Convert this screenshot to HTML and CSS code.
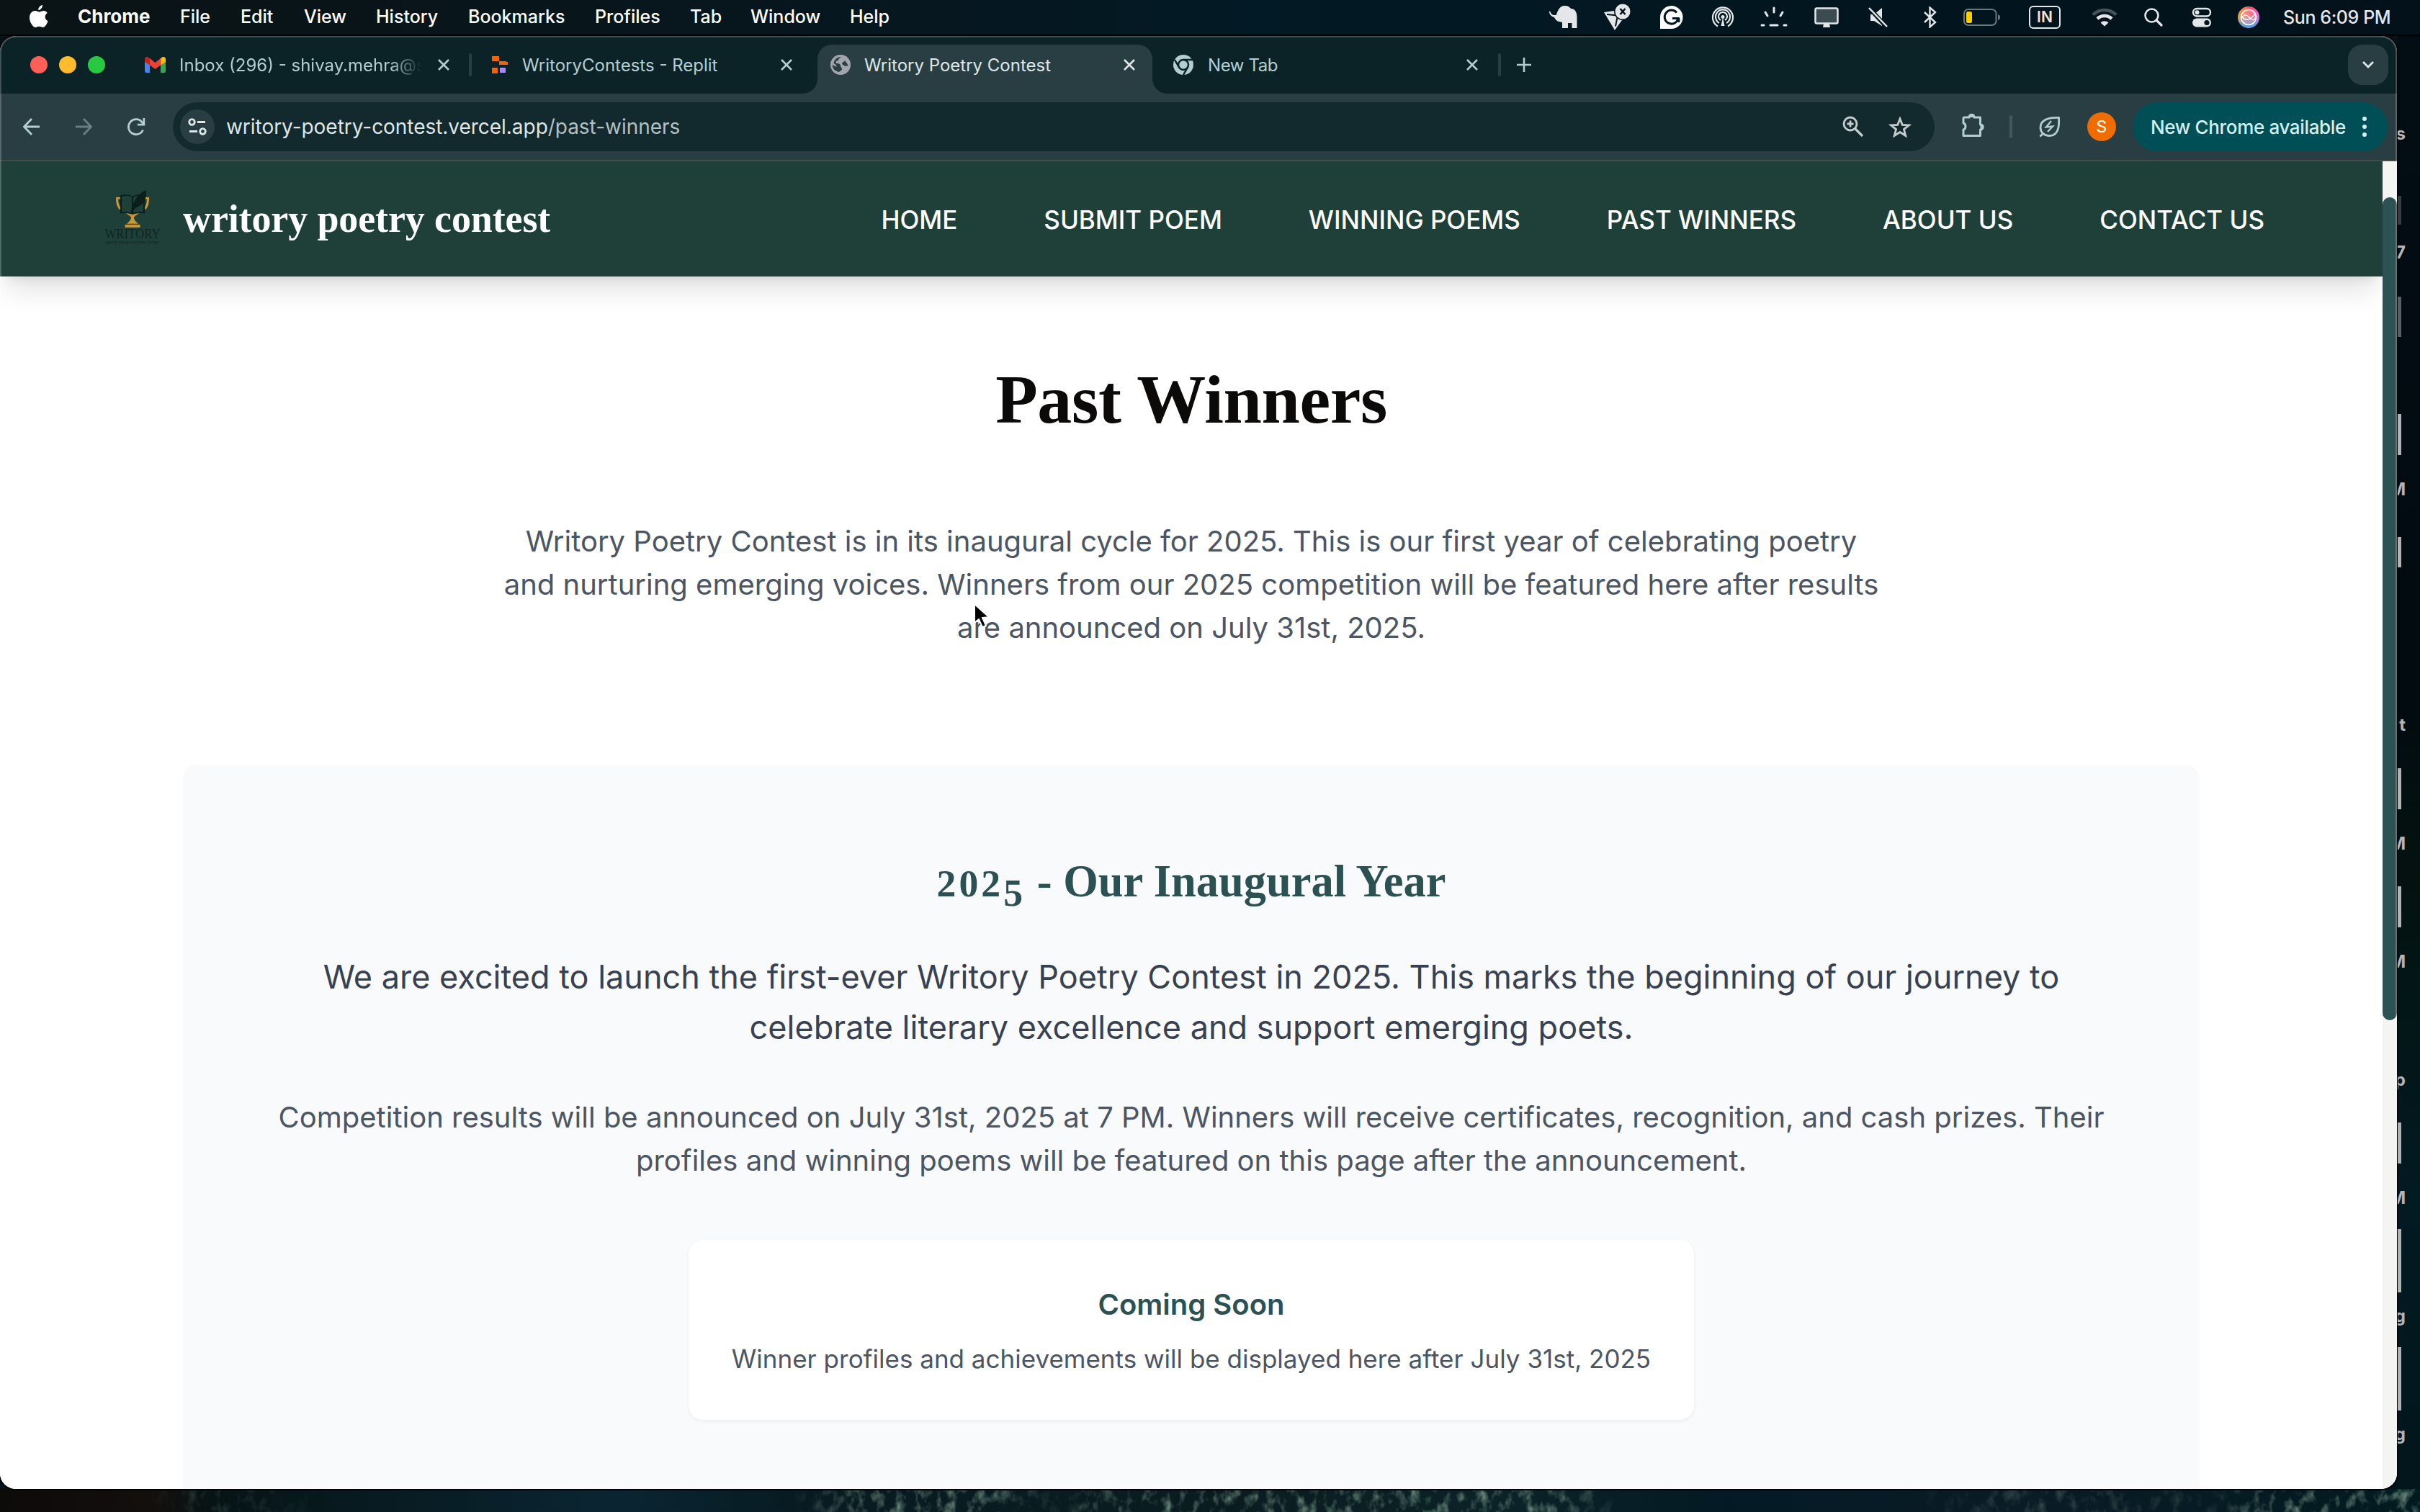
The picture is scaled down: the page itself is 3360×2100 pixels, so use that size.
FILE: index.html
```html
<!DOCTYPE html>
<html lang="en">
<head>
<meta charset="utf-8">
<title>Writory Poetry Contest</title>
<link rel="stylesheet" href="styles.css">
</head>
<body>
<div class="menubar">
  <svg class="apple" width="28" height="32" viewBox="0 0 28 32" fill="#fff"><path d="M19 0c.3 3.500-2.800 7-5.800 7C12.800 3.600 16 .4 19 0z"/><path d="M25.800 11c-4.600 2.900-3.800 9.300.8 11.200C25.300 26 22.500 31 19.600 31c-2 0-2.700-1.200-5.100-1.200S11.200 31 9.400 31C5.500 31 1 23.600 1 17.500 1 11.300 5 8 8.800 8c2.500 0 4.100 1.500 5.900 1.500C16.400 9.500 17.900 8 20.800 8c2 0 3.900 1.100 5 3z"/></svg>
  <div class="menus"><b>Chrome</b><span>File</span><span>Edit</span><span>View</span><span>History</span><span>Bookmarks</span><span>Profiles</span><span>Tab</span><span>Window</span><span>Help</span></div>
  <div class="status">
    <svg width="40" height="32" viewBox="0 0 40 32" fill="#e4e7e9"><path d="M1 8c1-.5 1.500 0 2 1.500 1 3 4 4.500 8 3C13 6 16 0 22 0c5 0 7 1.500 9 4 6 0 8.500 5 8.500 12v15h-7v-7h-5.500v7h-8v-8c-7-1-9-3-11-7C4 15 1 12 1 8z"/></svg>
    <svg width="38" height="38" viewBox="0 0 38 38"><path d="M1 12l14-2 11 13-10 14z" fill="#e4e7e9"/><path d="M5 15l15 1.500-3 15" stroke="#03161f" stroke-width="2" fill="none"/><circle cx="27" cy="11" r="12" fill="#03161f"/><circle cx="27" cy="11" r="10.500" fill="#e4e7e9"/><path d="M23.500 7l7 8m0-8l-7 8" stroke="#03161f" stroke-width="2.600"/></svg>
    <svg width="33" height="32" viewBox="0 0 33 32"><path d="M16.500 0a16 16 0 1 1 0 32H1V16A16 16 0 0 1 16.500 0z" fill="#fff"/><path d="M24 9.500a9.500 9.500 0 1 0 2 8H18M27 17v6" fill="none" stroke="#03161f" stroke-width="3"/></svg>
    <svg width="32" height="32" viewBox="0 0 32 32" fill="none" stroke="#e4e7e9" stroke-width="2.200"><path d="M9 28.500a14 14 0 1 1 14 0M11 24a10 10 0 1 1 10 0M13 20a6 6 0 1 1 6 0"/><path d="M16 16l-2.500 12h5z" fill="#e4e7e9" stroke="none"/><circle cx="16" cy="15.500" r="2.500" fill="#e4e7e9" stroke="none"/></svg>
    <svg width="40" height="30" viewBox="0 0 40 30" fill="none" stroke="#e4e7e9" stroke-width="3" stroke-linecap="round"><path d="M20 2v6M8 8l3 5M32 8l-3 5M3 26h3M15 26h10M34 26h3"/></svg>
    <svg width="34" height="28" viewBox="0 0 34 28"><rect x="1.500" y="1.500" width="31" height="21" rx="2" fill="#3b4b51" stroke="#e4e7e9" stroke-width="2.500"/><path d="M13 23h8l1 5H12z" fill="#e4e7e9"/></svg>
    <svg width="28" height="28" viewBox="0 0 28 28"><path d="M3 10h5l11-9v25L8 19H3z" fill="#e4e7e9"/><path d="M1 1l24 26" stroke="#03161f" stroke-width="6"/><path d="M1 1l25 26" stroke="#e4e7e9" stroke-width="2.500"/></svg>
    <svg width="20" height="30" viewBox="0 0 20 30" fill="none" stroke="#e4e7e9" stroke-width="2.400"><path d="M2 8l15 14-7.500 6.500V1.500L17 8 2 22"/></svg>
    <svg width="52" height="24" viewBox="0 0 52 24"><rect x="1" y="1" width="44.500" height="22" rx="6" fill="none" stroke="#6d787d" stroke-width="2"/><path d="M48 8c4 1 4 7 0 8z" fill="#6d787d"/><rect x="4" y="4" width="8" height="16" rx="2.500" fill="#fc0"/></svg>
    <span class="ime">IN</span>
    <svg width="36" height="26" viewBox="0 0 36 26" fill="none" stroke="#e4e7e9" stroke-width="4.500"><path d="M2 9.500a23 23 0 0 1 32 0" stroke="#46545a"/><path d="M8 15a14.500 14.500 0 0 1 20 0"/><path d="M12.500 20.500a8 8 0 0 1 11 0L18 25.500z" fill="#e4e7e9" stroke="none"/></svg>
    <svg width="26" height="26" viewBox="0 0 26 26" fill="none" stroke="#e4e7e9" stroke-width="2.600" stroke-linecap="round"><circle cx="10.500" cy="10.500" r="9"/><path d="M17 17l7 7" stroke-width="3.200"/></svg>
    <svg width="28" height="28" viewBox="0 0 28 28"><rect x="2" y="2" width="24" height="10.500" rx="5.200" fill="none" stroke="#e4e7e9" stroke-width="2.400"/><circle cx="7.500" cy="7.200" r="3" fill="#e4e7e9"/><rect x="1" y="15.500" width="26" height="12" rx="6" fill="#e4e7e9"/><circle cx="21" cy="21.500" r="3.600" fill="#03161f"/></svg>
    <svg width="30" height="30" viewBox="0 0 30 30"><defs><linearGradient id="siri" x1="0" y1="0" x2="1" y2="0"><stop offset="0" stop-color="#f7a13c"/><stop offset=".6" stop-color="#ff4f6d"/><stop offset="1" stop-color="#e06be0"/></linearGradient><linearGradient id="siri-low" x1="0" y1="0" x2="0" y2="1"><stop offset=".4" stop-color="#45b4ff" stop-opacity="0"/><stop offset="1" stop-color="#35a8ff"/></linearGradient></defs><circle cx="15" cy="15" r="15" fill="url(#siri)"/><circle cx="15" cy="15" r="15" fill="url(#siri-low)"/><circle cx="15" cy="15" r="10.500" fill="#fff" fill-opacity=".2" stroke="#fff" stroke-width="1.600"/><path d="M5 16c6-8 10-2 13 1s6 1 7-2M5 14c7 7 12 4 19-3" fill="none" stroke="#fff" stroke-width="1.400"/></svg>
    <span class="clock">Sun 6:09 PM</span>
  </div>
</div>

<div class="desktop">
<div class="window">
  <div class="tabstrip">
    <div class="lights"><i class="red"></i><i class="amber"></i><i class="green"></i></div>
    <div class="tab t1">
      <svg width="29" height="22" viewBox="0 0 29 22"><path d="M0 5v15a2 2 0 0 0 2 2h5V9z" fill="#4285f4"/><path d="M29 5v15a2 2 0 0 1-2 2h-5V9z" fill="#34a853"/><path d="M22 2l2.500-1.700C27-1 29 1 29 3v4l-7 4.500z" fill="#fbbc04"/><path d="M7 2L4.500.3C2-1 0 1 0 3v4l7 4.500z" fill="#c5221f"/><path d="M7 2l7.500 6L22 2v9.500L14.500 17 7 11.500z" fill="#ea4335"/></svg>
      <span class="label fade">Inbox (296) - shivay.mehra@s</span>
      <svg class="x" viewBox="0 0 16 16"><path d="M1 1l14 14M15 1L1 15"/></svg>
    </div>
    <i class="sep"></i>
    <div class="tab t2">
      <svg width="22" height="24" viewBox="0 0 22 24"><path d="M0 0h10v7H0zM10 8h12v4H10zM0 16h8v8H0z" fill="#f26207"/><path d="M10 7h10v4H10z" fill="#f26207"/><path d="M11 16h8v7h-8z" fill="#a78bfa"/></svg>
      <span class="label">WritoryContests - Replit</span>
      <svg class="x" viewBox="0 0 16 16"><path d="M1 1l14 14M15 1L1 15"/></svg>
    </div>
    <div class="tab t3">
      <svg width="28" height="28" viewBox="0 0 28 28"><circle cx="14" cy="14" r="14" fill="#a2a4ae"/><path d="M15 3c-2 2-4 2-4 5-3 0-4 2-3 4 3 0 5 0 6 3 0 3 2 2 2 5 0 2-2 2-4 4-5-1-9-4-9.500-10l6 3c0-3-2-4-4-5C5 7 9 3 15 3zM20 8l5 7c-2 1-3 0-4 1-2-1-5-2-5-5 2-1 3-1 4-3z" fill="#283e42"/></svg>
      <span class="label">Writory Poetry Contest</span>
      <svg class="x" viewBox="0 0 16 16"><path d="M1 1l14 14M15 1L1 15"/></svg>
    </div>
    <div class="tab t4">
      <svg width="28" height="28" viewBox="0 0 28 28"><circle cx="14" cy="14" r="14" fill="#b3ced2"/><circle cx="14" cy="14" r="7" fill="none" stroke="#0b2226" stroke-width="2.500"/><path d="M14 7h13M8 17.500L2 7M20 17.500L14 28" stroke="#0b2226" stroke-width="2.500"/></svg>
      <span class="label">New Tab</span>
      <svg class="x" viewBox="0 0 16 16"><path d="M1 1l14 14M15 1L1 15"/></svg>
    </div>
    <i class="sep"></i>
    <svg class="plus" width="20" height="20" viewBox="0 0 20 20"><path d="M10 0v20M0 10h20" stroke="#b3ced2" stroke-width="2.600"/></svg>
    <span class="drop"><svg width="18" height="12" viewBox="0 0 18 12"><path d="M2 2l7 7 7-7" fill="none" stroke="#dfe6e7" stroke-width="2.800"/></svg></span>
  </div>

  <div class="toolbar">
    <svg width="24" height="24" viewBox="0 0 24 24"><path d="M23 12H2M12 1L1.500 12 12 23" fill="none" stroke="#b3ced2" stroke-width="2.800"/></svg>
    <svg width="24" height="24" viewBox="0 0 24 24"><path d="M1 12h21M12 1l10.500 11L12 23" fill="none" stroke="#6a7f84" stroke-width="2.800"/></svg>
    <svg width="26" height="26" viewBox="0 0 26 26"><path d="M22.500 17.500A10.500 10.500 0 1 1 21 6.500l2.500 3" fill="none" stroke="#b3ced2" stroke-width="2.800"/><path d="M23.800 1v9.200H15" fill="none" stroke="#b3ced2" stroke-width="2.800"/></svg>
    <div class="omnibox">
      <span class="tune"><svg width="26" height="24" viewBox="0 0 26 24" fill="none" stroke="#dfe6e7" stroke-width="2.800"><circle cx="5.500" cy="5.500" r="3.800"/><path d="M13 5.500h11M2 18.500h11"/><circle cx="20.500" cy="18.500" r="3.800"/></svg></span>
      <span class="url">writory-poetry-contest.vercel.app<em>/past-winners</em></span>
      <svg class="mag" width="30" height="30" viewBox="0 0 30 30" fill="none" stroke="#c5cccd" stroke-width="2.800"><circle cx="11" cy="11" r="9"/><path d="M17.500 17.500L28 28" stroke-width="3.200"/><path d="M11 6.500v9M6.500 11h9"/></svg>
      <svg width="32" height="30" viewBox="0 0 32 30"><path d="M16 4l3.300 8.300 9.200.6-7.100 5.700 2.400 8.900-7.800-5-7.800 5 2.400-8.900L3.500 12.900l9.200-.6z" fill="none" stroke="#c5cccd" stroke-width="2.800"/></svg>
    </div>
    <svg class="puzzle" width="34" height="34" viewBox="0 0 34 34"><path d="M4 6h7c0-5 7-5 7 0h8.500v10c5 0 5 7 0 7v8.500H3V23c4-1 4-8 0-9V7z" fill="none" stroke="#b3ced2" stroke-width="3" stroke-linejoin="round"/><path d="M11 6c0-6 8-6 8 0zM26.500 15c6 0 6 8 0 8z" fill="#b3ced2"/></svg>
    <i class="sep"></i>
    <svg class="leaf" width="30" height="30" viewBox="0 0 30 30" fill="none" stroke="#b3ced2" stroke-width="2.800"><path d="M27.500 2.500C28.500 16 26 27.500 15 27.500 6 27.500 2 22 2 16 2 7 10 2 27.500 2.500zM1.500 28.500l5-5"/><path d="M17 7l-7 8.500 9-1L12 22" stroke-width="2.400"/></svg>
    <span class="avatar">S</span>
    <span class="chip"><span>New Chrome available</span><svg width="6" height="28" viewBox="0 0 6 28" fill="#d4eef1"><circle cx="3" cy="3" r="3"/><circle cx="3" cy="14" r="3"/><circle cx="3" cy="25" r="3"/></svg></span>
  </div>

  <div class="viewport">
    <div class="page">
      <header class="nav">
        <div class="nav-inner">
          <div class="brand">
            <svg width="100" height="100" viewBox="0 0 100 100">
              <g transform="translate(0 .3) scale(1 .806)">
                <path d="M34 26h-5.500c0 9 1 16 7 21M66 26h5.500c0 9-1 16-7 21" fill="none" stroke="#c99735" stroke-width="3"/>
                <path d="M40 51c4 4 7 5 8 8 0 5-3 8-6 11h16c-3-3-6-6-6-11 1-3 4-4 8-8-4 0-8 0-10 2-2-2-6-2-10-2zM39.500 71.500h21v5h-21z" fill="#c99735"/>
                <path d="M34 22c7-2 12-1 16 2 4-3 9-4 16-2v29c-7-1-12 0-16 2-4-2-9-3-16-2zM50 24v28" fill="#1e4039" stroke="#0a1f1c" stroke-width="2.200"/>
                <path d="M69 12c1 14-3 26-15 31l-6 9c1-14 7-33 21-40z" fill="#0a1f1c"/>
              </g>
              <text x="50" y="77" class="logo-name" textLength="77" lengthAdjust="spacingAndGlyphs">WRITORY</text>
              <text x="50" y="85" class="logo-tag" textLength="74" lengthAdjust="spacingAndGlyphs">WRITE YOUR VICTORY STORY</text>
            </svg>
            <span class="brand-name">writory poetry contest</span>
          </div>
          <nav class="links"><a>HOME</a><a>SUBMIT POEM</a><a>WINNING POEMS</a><a>PAST WINNERS</a><a>ABOUT US</a><a>CONTACT US</a></nav>
        </div>
      </header>
      <main>
        <h1>Past Winners</h1>
        <p class="intro">Writory Poetry Contest is in its inaugural cycle for 2025. This is our first year of celebrating poetry and nurturing emerging voices. Winners from our 2025 competition will be featured here after results are announced on July 31st, 2025.</p>
        <section class="card">
          <h2><span class="osf">202</span><span class="osf low">5</span> - Our Inaugural Year</h2>
          <p class="lead">We are excited to launch the first-ever Writory Poetry Contest in 2025. This marks the beginning of our journey to celebrate literary excellence and support emerging poets.</p>
          <p class="detail">Competition results will be announced on July 31st, 2025 at 7 PM. Winners will receive certificates, recognition, and cash prizes. Their profiles and winning poems will be featured on this page after the announcement.</p>
          <div class="soon">
            <h3>Coming Soon</h3>
            <p>Winner profiles and achievements will be displayed here after July 31st, 2025</p>
          </div>
        </section>
      </main>
    </div>
    <div class="scrollbar"><div class="thumb"></div></div>
  </div>
</div>

<div class="icons">
  <span style="top:120px">s</span><i style="top:222px;height:40px;opacity:.3"></i><span style="top:285px">7</span><i style="top:362px;height:56px;opacity:.5"></i>
  <i style="top:525px;height:57px"></i><span style="top:614px">M</span><i style="top:696px;height:42px"></i>
  <span style="top:941px">t</span><i style="top:1017px;height:57px"></i><span style="top:1106px">M</span>
  <i style="top:1181px;height:57px"></i><span style="top:1270px">M</span><span style="top:1434px">p</span>
  <i style="top:1509px;height:57px"></i><span style="top:1598px">M</span><i style="top:1657px;height:88px"></i>
  <span style="top:1762px">g</span><i style="top:1821px;height:88px"></i><span style="top:1926px">g</span>
</div>
</div>
<svg class="wallpaper" width="3360" height="32" viewBox="0 0 3360 32">
  <defs>
    <filter id="foliage" x="0" y="0" width="100%" height="100%"><feTurbulence type="fractalNoise" baseFrequency=".07 .05" numOctaves="3" seed="4"/><feColorMatrix values="0 0 0 0 .22  0 0 0 0 .36  0 0 0 0 .28  2 0 0 0 -.95"/></filter>
  </defs>
  <g filter="url(#foliage)"><rect width="3360" height="32" fill="none"/></g>
</svg>
<svg class="pointer" width="26" height="40" viewBox="0 0 26 40"><path d="M3 2v26l6-5 5 11 5-2-5-11 9-1z" fill="#000" stroke="#fff" stroke-width="2"/></svg>
</body>
</html>
```
FILE: styles.css
```css
* { box-sizing: border-box; margin: 0; padding: 0; }
body {
  width: 3360px; height: 2100px; overflow: hidden; position: relative;
  font-family: Inter, "Liberation Sans", sans-serif;
  background: #04131a;
  display: flex; flex-direction: column;
}
svg { flex: none; display: block; }
.wallpaper {
  background: linear-gradient(90deg, #0d0b0a, #120f0d 220px, #061416 300px, #0a2532 860px, #071b22 1100px, #0a1c20 1700px, #0b2228 2100px, #031a24 2400px, #0a1c26 2800px, #021a20);
}
.wallpaper g {
  -webkit-mask-image: linear-gradient(90deg, transparent 200px, rgba(0,0,0,.4) 300px, transparent 450px 1100px, #000 1200px 1350px, rgba(0,0,0,.2) 1450px, #000 1600px 2150px, transparent 2250px 2650px, rgba(0,0,0,.4) 2800px 2950px, rgba(0,0,0,.2) 3080px, #000 3150px);
  mask-image: linear-gradient(90deg, transparent 200px, rgba(0,0,0,.4) 300px, transparent 450px 1100px, #000 1200px 1350px, rgba(0,0,0,.2) 1450px, #000 1600px 2150px, transparent 2250px 2650px, rgba(0,0,0,.4) 2800px 2950px, rgba(0,0,0,.2) 3080px, #000 3150px);
}

.menubar { height: 50px; flex: none; display: flex; color: #fff; font-size: 25px; line-height: 46px;
  background: linear-gradient(90deg, #0b1315, #061720 40%, #021a25 52%, #02161f 75%, #03111a); border-bottom: 2px solid #000; }
.apple { margin: 7px 0 0 40px; }
.menus { display: grid; margin-left: 40px; width: 2025px; white-space: nowrap;
  grid-template-columns: 142px 84px 88px 100px 128px 176px 132px 84px 138px 1fr; font-weight: 500; }
.menus b { font-weight: 700; font-size: 26px; }
.status { display: grid; align-items: center; justify-items: center; height: 48px; color: #e4e7e9; font-weight: 500;
  grid-template-columns: 74px 76px 74px 70px 72px 73px 72px 71px 74px 100px 66px 70px 64px 66px 180px; }
.ime { width: 44px; height: 32px; border: 2.5px solid #e4e7e9; border-radius: 6px; font-size: 21px; line-height: 28px; text-align: center; font-weight: 600; }
.clock { justify-self: start; margin-left: 15px; white-space: nowrap; line-height: 44px; letter-spacing: -.4px; }

.desktop { height: 2018px; flex: none; display: grid; grid-template-columns: 3328px 32px; }
.window { position: relative; border-radius: 22px; overflow: hidden; background: #fff; display: flex; flex-direction: column; box-shadow: 0 0 0 2px #000; }
.window::after { content: ""; position: absolute; inset: 0; border-radius: 22px; box-shadow: inset 0 0 0 2px rgba(255,255,255,.22); pointer-events: none; }

.tabstrip { height: 80px; flex: none; background: #0b2226; display: flex; align-items: center; position: relative; }
.lights { display: flex; gap: 16px; margin-left: 42px; width: 159px; }
.lights i { width: 24px; height: 24px; border-radius: 50%; }
.red { background: #ff5f57; } .amber { background: #febc2e; } .green { background: #28c840; }
.tab { display: flex; align-items: center; color: #b3ced2; font-size: 24px; height: 80px; }
.tab .x { width: 16px; height: 16px; stroke: currentColor; stroke-width: 2.6; }
.label { white-space: nowrap; flex: 1; overflow: hidden; }
.tabstrip .sep { width: 4px; height: 32px; border-radius: 2px; background: #283e42; }
.t1 { width: 450px; gap: 19px; padding-right: 27px; }
.t1 .label { margin-right: 0; }
.fade { -webkit-mask-image: linear-gradient(90deg, #000 86%, transparent 99%); mask-image: linear-gradient(90deg, #000 86%, transparent 99%); }
.t2 { width: 480px; padding: 0 35px 0 28px; gap: 20px; }
.t3 { width: 465px; height: 68px; align-self: flex-end; background: #283e42; border-radius: 20px 20px 0 0; color: #dfe6e7; padding: 0 24px 12px 18px; gap: 19px; position: relative; }
.t3::before, .t3::after { content: ""; position: absolute; bottom: 0; width: 20px; height: 20px; }
.t3::before { left: -20px; background: radial-gradient(circle at 0 0, transparent 19.5px, #283e42 20px); }
.t3::after { right: -20px; background: radial-gradient(circle at 100% 0, transparent 19.5px, #283e42 20px); }
.t4 { width: 480px; padding: 0 28px 0 29px; gap: 20px; }
.t4 .label { letter-spacing: -.4px; }
.plus { margin-left: 22px; }
.drop { width: 56px; height: 56px; border-radius: 20px; background: #283e42; margin: 0 12px 0 auto; display: flex; align-items: center; justify-content: center; }

.toolbar { height: 94px; flex: none; background: #283e42; border-bottom: 2px solid #454a4c; display: flex; align-items: center; padding-left: 32px; gap: 48px; }
.omnibox { width: 2446px; height: 68px; border-radius: 34px; background: #12292d; display: flex; align-items: center; padding: 0 32px 0 10px; margin-left: -10px; }
.tune { width: 48px; height: 48px; border-radius: 50%; background: #283e42; display: flex; align-items: center; justify-content: center; }
.url { margin-left: 16px; font-size: 28px; letter-spacing: -.04px; color: #dfe6e7; white-space: nowrap; }
.url em { font-style: normal; color: #b5c0c2; }
.mag { margin-left: auto; margin-right: 34px; }
.puzzle { margin-left: -11px; margin-top: -4px; }
.toolbar .sep { width: 4px; height: 32px; border-radius: 2px; background: #43585d; margin: 0 -11px 0 -15px; }
.avatar { width: 40px; height: 40px; border-radius: 50%; background: #ef6c00; color: #fff; font-size: 23px; line-height: 40px; text-align: center; margin-left: -11px; }
.chip { width: 354px; height: 68px; border-radius: 34px; background: #004f57; color: #d4eef1; font-size: 26px; letter-spacing: -.35px; font-weight: 500; display: flex; align-items: center; justify-content: space-between; padding: 0 29px 0 25px; margin-left: -25px; white-space: nowrap; }

.viewport { flex: 1; display: grid; grid-template-columns: 3308px 20px; min-height: 0; }
.page { overflow: hidden; background: #fff; }
.scrollbar { background: #f4f4f3; padding-top: 50px; }
.thumb { height: 1143px; border-radius: 10px; background: #2d5254; }
.nav { height: 160px; background: #1e4039; box-shadow: 0 25px 38px -8px rgba(0,0,0,.12), 0 10px 15px -10px rgba(0,0,0,.12); position: relative; }
.nav-inner { width: 3200px; height: 160px; margin: 0 auto; padding: 0 80px; display: flex; align-items: center; justify-content: space-between; }
.brand { display: flex; align-items: center; gap: 20px; }
.brand svg { overflow: visible; }
.logo-name { font: 18px "Liberation Serif", serif; fill: #11241f; text-anchor: middle; }
.logo-tag { font: 5px Inter, sans-serif; fill: #11241f; text-anchor: middle; }
.brand-name { font: 700 54px "Liberation Serif", serif; letter-spacing: -.12px; color: #fff; white-space: nowrap; }
.links { display: flex; gap: 60px; padding-top: 2px; }
.links a { padding: 0 30px; font-size: 35px; font-weight: 500; color: #fff; line-height: 50px; white-space: nowrap; }
main { width: 2800px; margin: 0 auto; padding-top: 121px; text-align: center; }
h1 { font: 700 96px/100px "Liberation Serif", serif; letter-spacing: -.4px; color: #0c0a09; margin-bottom: 117px; }
.intro { width: 1920px; margin: 0 auto 160px; font-size: 40px; line-height: 60px; color: #4b5563; }
.card { height: 1100px; background: #f9fafb; border-radius: 20px; padding: 120px; }
h2 { font: 700 62.5px/80px "Liberation Serif", serif; height: 80px; color: #2c5153; padding-top: 2px; margin-bottom: 60px; }
.osf { font-size: .86em; letter-spacing: 4px; line-height: 0; }
.low { position: relative; top: .24em; }
.lead { font-size: 45px; line-height: 70px; color: #374151; margin-bottom: 60px; }
.detail { font-size: 40px; line-height: 60px; color: #4b5563; margin-bottom: 80px; }
.soon { display: inline-block; background: #fff; border-radius: 20px; padding: 60px; box-shadow: 0 2px 5px rgba(0,0,0,.06); }
h3 { font-size: 40px; line-height: 60px; font-weight: 600; color: #2c5153; margin-bottom: 20px; }
.soon p { font-size: 35px; line-height: 50px; color: #4b5563; }

.icons { position: relative; overflow: hidden; margin-left: 1px; background: linear-gradient(180deg, #020d14, #020b10 45%, #03120f 58%, #021a22 80%, #02161c); }
.icons span { position: absolute; right: 20px; font-size: 24px; font-weight: 700; line-height: 32px; color: #b4b6b8; }
.icons i { position: absolute; left: 0; width: 5px; background: #b4b1b1; }
.pointer { position: absolute; left: 1350px; top: 837px; }
```
